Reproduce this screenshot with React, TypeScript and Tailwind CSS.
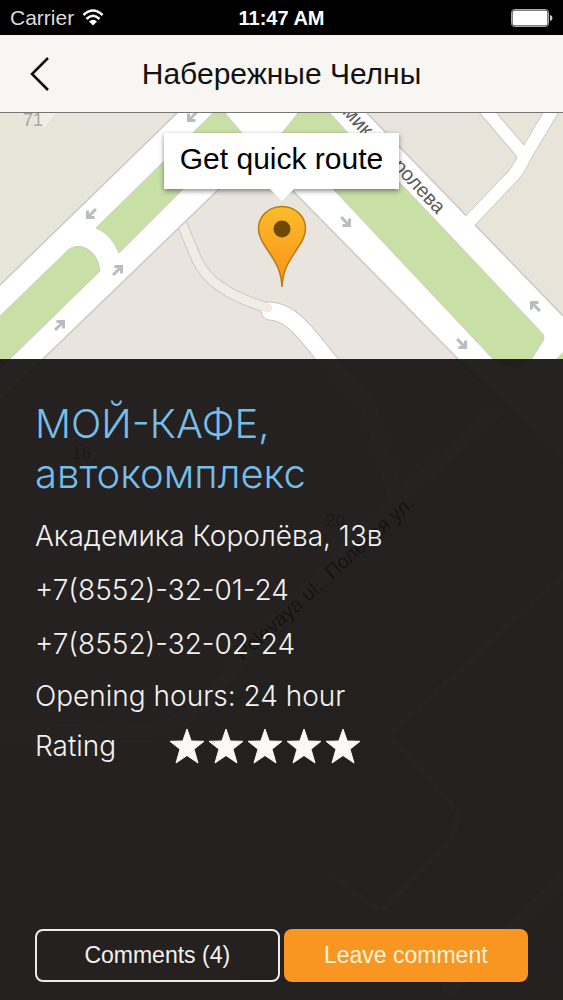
import { Fragment } from "react";

const phones = ["+7(8552)-32-01-24", "+7(8552)-32-02-24"];

const roadArrows = [
  { x: 192, y: 117, angle: 135 },
  { x: 91, y: 214, angle: 135 },
  { x: 118, y: 270, angle: -45 },
  { x: 60, y: 325, angle: -45 },
  { x: 346, y: 222, angle: 46 },
  { x: 462, y: 344, angle: 46 },
  { x: 535, y: 306, angle: -134 },
];

function StreetMap() {
  return (
    <svg
      className="absolute inset-0 size-full"
      viewBox="0 113 563 887"
      preserveAspectRatio="xMidYMin slice"
      aria-hidden="true"
    >
      <defs>
        <linearGradient id="ground" x1="0" y1="0" x2="1" y2="0">
          <stop offset="0" stopColor="#e6e6da" />
          <stop offset="0.45" stopColor="#e9e5dd" />
          <stop offset="1" stopColor="#e8e4da" />
        </linearGradient>
      </defs>
      <rect x="0" y="113" width="563" height="887" fill="url(#ground)" />
      <path d="M43 359 L255 153 L293 191 L458 359 L390 480 L0 480Z" fill="#e9e4dd" />
      <path d="M36 113 H56 L45 127 H36Z" fill="#f0efe6" />

      {/* blocks under the details panel */}
      <path d="M240 667 L400 500 L493 415 L563 462 V1000 H240Z" fill="#dde3c8" />
      <path d="M400 620 L563 560 V1000 H300Z" fill="#e2dccf" />
      <path d="M540 380 L563 350 V440 L522 392Z" fill="#a9d18b" />

      {/* side streets */}
      <g fill="none" strokeLinecap="round" strokeLinejoin="round">
        <g stroke="#cbc7c2">
          <path d="M484 108 L523 154" strokeWidth="14" />
          <path d="M556 104 L525 156 Q518 172 508 181 L470 221" strokeWidth="14" />
          <path d="M182 224 L197 260 Q205 277 221 287 Q238 299 268 308" strokeWidth="11" />
          <path d="M270 311 C288 312 299 323 329 362 L366 400 L397 498" strokeWidth="19" />
          <path d="M493 415 L403 495 L240 660 Q190 727 150 730 L0 732" strokeWidth="18" />
          <path d="M563 575 L390 735 L458 812 Q458 830 448 842 L380 912 L328 872" strokeWidth="9" />
          <path d="M563 880 L450 990" strokeWidth="18" />
        </g>
        <g stroke="#fff">
          <path d="M484 108 L523 154" strokeWidth="12" />
          <path d="M556 104 L525 156 Q518 172 508 181 L470 221" strokeWidth="12" />
          <path d="M270 311 C288 312 299 323 329 362 L366 400 L397 498" strokeWidth="17" />
          <path d="M493 415 L403 495 L240 660 Q190 727 150 730 L0 732" strokeWidth="16" />
          <path d="M563 575 L390 735 L458 812 Q458 830 448 842 L380 912 L328 872" strokeWidth="7" />
          <path d="M563 880 L450 990" strokeWidth="16" />
        </g>
        <path d="M182 224 L197 260 Q205 277 221 287 Q238 299 268 308" stroke="#f2ece5" strokeWidth="9" />
      </g>

      {/* the two avenues */}
      <path
        d="M-2 287 L178 112 H366 L565 318 V464 L458 359 L293 191 L255 153 L217 191 L43 359 L-2 404Z"
        fill="#fff"
        stroke="#cbc9c6"
        strokeWidth="1.5"
      />
      <path d="M556 104 L525 156 Q518 172 508 181 L467 224" fill="none" stroke="#fff" strokeWidth="12" />
      <g fill="#c8dfa6" stroke="#cdcfc0">
        <path d="M96 228 L160 165 L213 113 H225 L242 133 L182 190 L119 253 Q111 234 96 228Z" />
        <path d="M-2 318 L68 250 Q74 245 83 247 Q98 252 100 271 L12 357 L-2 371Z" />
        <path d="M298 113 H330 L348 133 L408 191 L543 334 Q545 337 543 341 L531 360 Q510 375 493 359 L335 191 L282 133Z" />
      </g>
      <path d="M556 359 L563 352 V359Z" fill="#c8dfa6" />

      {/* traffic directions */}
      <g fill="none" stroke="#b9bdc2" strokeWidth="3">
        {roadArrows.map((a) => (
          <path key={`${a.x}-${a.y}`} d="M-7 0 H5 M0 -5 L5 0 L0 5" transform={`translate(${a.x} ${a.y}) rotate(${a.angle})`} />
        ))}
      </g>

      {/* labels */}
      <g fontFamily="Liberation Sans, sans-serif">
        <text x="23" y="126" fontSize="18" fill="#a7a59d">71</text>
        <text transform="translate(437 215) rotate(47)" textAnchor="end" fontSize="20" fill="#5c5b59">
          Академика Королева
        </text>
        <g fontSize="20" fill="#000">
          <text transform="translate(243 661) rotate(-42)">Polevaya ul.</text>
          <text transform="translate(332 580) rotate(-42)">Полевая ул.</text>
        </g>
        <g fontSize="17" fill="#555">
          <text x="72" y="459">16</text>
          <text x="326" y="526">20</text>
        </g>
      </g>
    </svg>
  );
}

function Pin() {
  return (
    <svg className="mt-1 h-[84px] w-[50px]" viewBox="0 0 50 84" aria-hidden="true">
      <defs>
        <linearGradient id="pin" x1="0" y1="0" x2="0" y2="1">
          <stop offset="0" stopColor="#fabd2b" />
          <stop offset="1" stopColor="#fb8f18" />
        </linearGradient>
      </defs>
      <path
        d="M25 82 C24 62 16 54 8 41 C4 35 1.500 30 1.500 24 C1.500 11 12 1.500 25 1.500 C38 1.500 48.500 11 48.500 24 C48.500 30 46 35 42 41 C34 54 26 62 25 82Z"
        fill="url(#pin)"
        stroke="#b67d16"
        strokeWidth="1.500"
      />
      <circle cx="25" cy="24" r="8.500" fill="#6d4a04" />
    </svg>
  );
}

function Star() {
  return (
    <svg className="size-9" viewBox="0 0 36 36" aria-hidden="true">
      <path
        d="M18 1 L22.200 13 L35 13.300 L25 21.200 L29 35 L18 27.500 L7 35 L11 21.200 L1 13.300 L13.800 13Z"
        fill="#fcf8f7"
        stroke="#fcf8f7"
        strokeLinejoin="round"
      />
    </svg>
  );
}

export default function App() {
  return (
    <div className="flex min-h-screen flex-col bg-[#232120] font-['Liberation_Sans',Arial,sans-serif]">
      {/* status bar */}
      <div className="grid h-[35px] grid-cols-3 items-center bg-black px-2.5 text-xl text-white">
        <div className="flex items-center gap-2 text-[21px] text-[#dcdcdc]">
          Carrier
          <svg className="h-[17px] w-[22px]" viewBox="0 0 22 17" aria-label="Wi-Fi">
            <g fill="none" stroke="#fff" strokeWidth="2.500">
              <path d="M1.500 6 Q11 -3 20.500 6" />
              <path d="M4.500 10 Q11 3.500 17.500 10" />
            </g>
            <path d="M7 12.500 Q11 9 15 12.500 L11 16.500Z" fill="#fff" />
          </svg>
        </div>
        <div className="text-center font-bold">11:47 AM</div>
        <svg className="h-[18px] w-[42px] justify-self-end" viewBox="0 0 42 18" aria-label="Battery">
          <rect x="0.500" y="0.500" width="37" height="17" rx="3" fill="none" stroke="#aaa" />
          <rect x="1.500" y="1.500" width="35" height="15" rx="2" fill="#fff" />
          <path d="M39 6 Q41.500 6.500 41.500 9 Q41.500 11.500 39 12Z" fill="#ccc" />
        </svg>
      </div>

      {/* navigation bar */}
      <header className="grid h-[78px] grid-cols-[56px_1fr_56px] items-center border-b border-[#77756f] bg-[#f7f6f2] px-3">
        <button type="button" aria-label="Back" className="flex h-11 items-center justify-center">
          <svg className="h-[36px] w-[22px]" viewBox="0 0 22 36" fill="none" stroke="#0c0c0c" strokeWidth="2.500" aria-hidden="true">
            <path d="M19 2 L3 18 L19 34" />
          </svg>
        </button>
        <h1 className="text-center text-[30px] leading-9 text-[#111]">Набережные Челны</h1>
      </header>

      <main className="relative flex flex-1 flex-col overflow-hidden">
        <StreetMap />

        <div className="relative flex h-[246px] flex-col items-center pt-5">
          <button type="button" className="h-14 bg-white px-4 pb-1 text-[30px] leading-9 text-black shadow-[0_2px_5px_rgba(0,0,0,0.45)]">
            Get quick route
          </button>
          <svg className="h-3 w-6" viewBox="0 0 24 12" aria-hidden="true">
            <path d="M0 0 H24 L12 12Z" fill="#fff" />
          </svg>
          <Pin />
        </div>

        {/* place details */}
        <section className="relative flex flex-1 flex-col bg-[#171414]/94 px-[35px] pt-10 pb-[18px] font-['Inter',sans-serif] font-light text-[#f4f2f1]">
          <h2 className="text-[40px] leading-[50px] text-[#76bde8]">
            МОЙ-КАФЕ,
            <br />
            автокомплекс
          </h2>
          <address className="mt-2.5 text-[28px] leading-[54px] not-italic">
            Академика Королёва, 13в
            {phones.map((phone) => (
              <Fragment key={phone}>
                <br />
                <a href={`tel:${phone}`}>{phone}</a>
              </Fragment>
            ))}
          </address>
          <p className="text-[28px] leading-[50px]">Opening hours: 24 hour</p>
          <div className="flex h-[50px] items-center text-[28px]">
            <span className="w-[134px]">Rating</span>
            <div className="flex gap-[3px]" role="img" aria-label="5 out of 5">
              {[1, 2, 3, 4, 5].map((n) => (
                <Star key={n} />
              ))}
            </div>
          </div>

          <div className="mt-auto grid grid-cols-2 gap-1 text-[23px] font-normal font-['Liberation_Sans',Arial,sans-serif]">
            <button type="button" className="h-[53px] rounded-lg border-2 border-[#ecebea]">
              Comments (4)
            </button>
            <button type="button" className="h-[53px] rounded-lg bg-[#f99621] text-[#fff3dc]">
              Leave comment
            </button>
          </div>
        </section>
      </main>
    </div>
  );
}
